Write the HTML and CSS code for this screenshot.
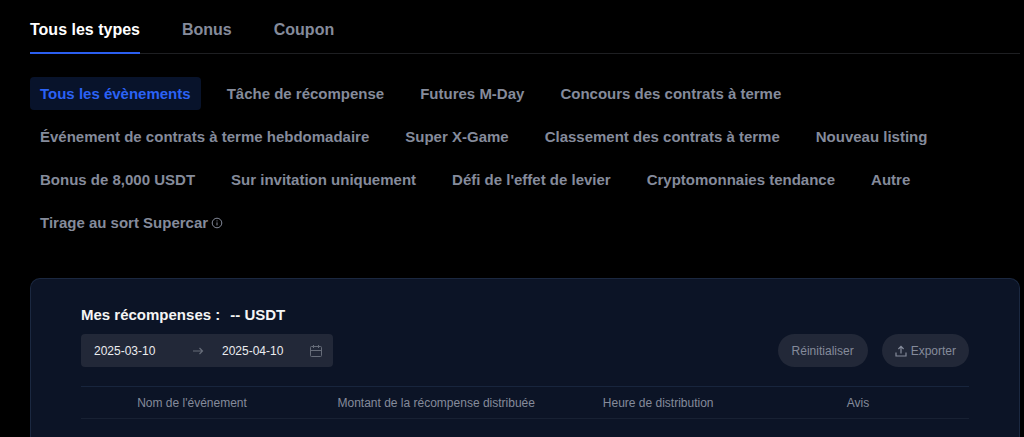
FILE: index.html
```html
<!DOCTYPE html>
<html lang="fr">
<head>
    <meta charset="UTF-8">
    <meta name="viewport" content="width=device-width, initial-scale=1">
    <title>Mes récompenses</title>
    <link rel="stylesheet" href="styles.css">
</head>
<body>
<nav class="tabs">
    <button type="button" class="tab active">Tous les types</button>
    <button type="button" class="tab">Bonus</button>
    <button type="button" class="tab">Coupon</button>
</nav>
<div class="filters">
    <button type="button" class="filter active">Tous les évènements</button>
    <button type="button" class="filter">Tâche de récompense</button>
    <button type="button" class="filter">Futures M-Day</button>
    <button type="button" class="filter">Concours des contrats à terme</button>
    <button type="button" class="filter">Événement de contrats à terme hebdomadaire</button>
    <button type="button" class="filter">Super X-Game</button>
    <button type="button" class="filter">Classement des contrats à terme</button>
    <button type="button" class="filter">Nouveau listing</button>
    <button type="button" class="filter">Bonus de 8,000 USDT</button>
    <button type="button" class="filter">Sur invitation uniquement</button>
    <button type="button" class="filter">Défi de l'effet de levier</button>
    <button type="button" class="filter">Cryptomonnaies tendance</button>
    <button type="button" class="filter">Autre</button>
    <button type="button" class="filter">Tirage au sort Supercar
        <svg class="info" viewBox="0 0 12 12" width="12" height="12" fill="none" stroke="currentColor">
            <circle cx="6" cy="6" r="4.8"/>
            <path d="M6 5.4v3M6 3.4v1"/>
        </svg>
    </button>
</div>
<main class="card">
    <h1><span>Mes récompenses :</span><span>-- USDT</span></h1>
    <div class="toolbar">
        <div class="range">
            <input type="text" value="2025-03-10" aria-label="Date de début">
            <svg class="arrow" viewBox="0 0 12 12" width="12" height="12" fill="none" stroke="currentColor" stroke-width="1.2">
                <path d="M1 6h9.5M7.5 3l3 3-3 3"/>
            </svg>
            <input type="text" value="2025-04-10" aria-label="Date de fin">
            <svg class="calendar" viewBox="0 0 14 14" width="14" height="14" fill="none" stroke="currentColor">
                <rect x="1.5" y="2.5" width="11" height="10" rx="1"/>
                <path d="M1.5 6.5h11M4.5 1v3M9.5 1v3"/>
            </svg>
        </div>
        <div class="actions">
            <button type="button" class="pill">Réinitialiser</button>
            <button type="button" class="pill export">
                <svg viewBox="0 0 12 12" width="12" height="12" fill="none" stroke="currentColor" stroke-width="1.2">
                    <path d="M1 7.5V11h10V7.5M6 8.5V1.5M3.4 4L6 1.4 8.6 4"/>
                </svg>
                Exporter
            </button>
        </div>
    </div>
    <table>
        <thead>
        <tr>
            <th class="name">Nom de l'événement</th>
            <th class="amount">Montant de la récompense distribuée</th>
            <th class="date">Heure de distribution</th>
            <th class="note">Avis</th>
        </tr>
        </thead>
    </table>
</main>
</body>
</html>
```

FILE: styles.css
```css
*{
    box-sizing:border-box;
}
body{
    margin:0;
    padding:8px 4px 0 30px;
    min-height:100vh;
    display:flex;
    flex-direction:column;
    background:#000;
    color:#858b9b;
    font-family:"Liberation Sans", Arial, sans-serif;
}
button,input{
    margin:0;
    padding:0;
    border:none;
    background:none;
    color:inherit;
    font-family:inherit;
}
button{
    cursor:pointer;
}
.tabs{
    display:flex;
    gap:42px;
    border-bottom:1px solid #1e1f22;
}
.tab{
    height:46px;
    margin-bottom:-1px;
    border-bottom:2px solid transparent;
    font-size:16px;
    font-weight:bold;
}
.tab.active{
    color:#fff;
    border-color:#2b5ff0;
}
.filters{
    display:flex;
    flex-wrap:wrap;
    gap:10px 16px;
    padding:23px 30px 0 0;
}
.filter{
    display:flex;
    align-items:center;
    gap:3px;
    height:33px;
    padding:0 10px;
    border-radius:4px;
    font-size:15px;
    font-weight:bold;
}
.filter.active{
    background:#08132b;
    color:#2b62f5;
}
.card{
    flex:1;
    margin-top:39px;
    padding:26px 50px 0;
    border:1px solid #1b2840;
    border-bottom:none;
    border-radius:10px 10px 0 0;
    background:#0c1426;
}
h1{
    display:flex;
    gap:10px;
    margin:0;
    color:#f5f5f5;
    font-size:15px;
    line-height:20px;
}
.toolbar{
    display:flex;
    justify-content:space-between;
    margin:9px 0 19px;
}
.range{
    display:flex;
    align-items:center;
    width:252px;
    height:33px;
    padding:0 10px 0 13px;
    border-radius:4px;
    background:#222838;
    color:#666c79;
}
.range input{
    width:80px;
    color:#eaecef;
    font-size:12px;
}
.arrow{
    margin:0 18px;
}
.calendar{
    margin-left:auto;
}
.actions{
    display:flex;
    gap:14px;
}
.pill{
    display:flex;
    align-items:center;
    gap:4px;
    height:33px;
    padding:0 14px;
    border-radius:17px;
    background:#222838;
    font-size:12px;
}
.export{
    padding:0 13px;
}
table{
    width:100%;
    table-layout:fixed;
    border-collapse:collapse;
    border-top:1px solid #18253d;
    border-bottom:1px solid #182133;
}
th{
    height:32px;
    padding:0;
    font-size:12px;
    font-weight:normal;
    text-align:center;
}
.name,.note{
    width:25%;
}
.amount{
    width:30%;
}
.date{
    width:20%;
}
```
